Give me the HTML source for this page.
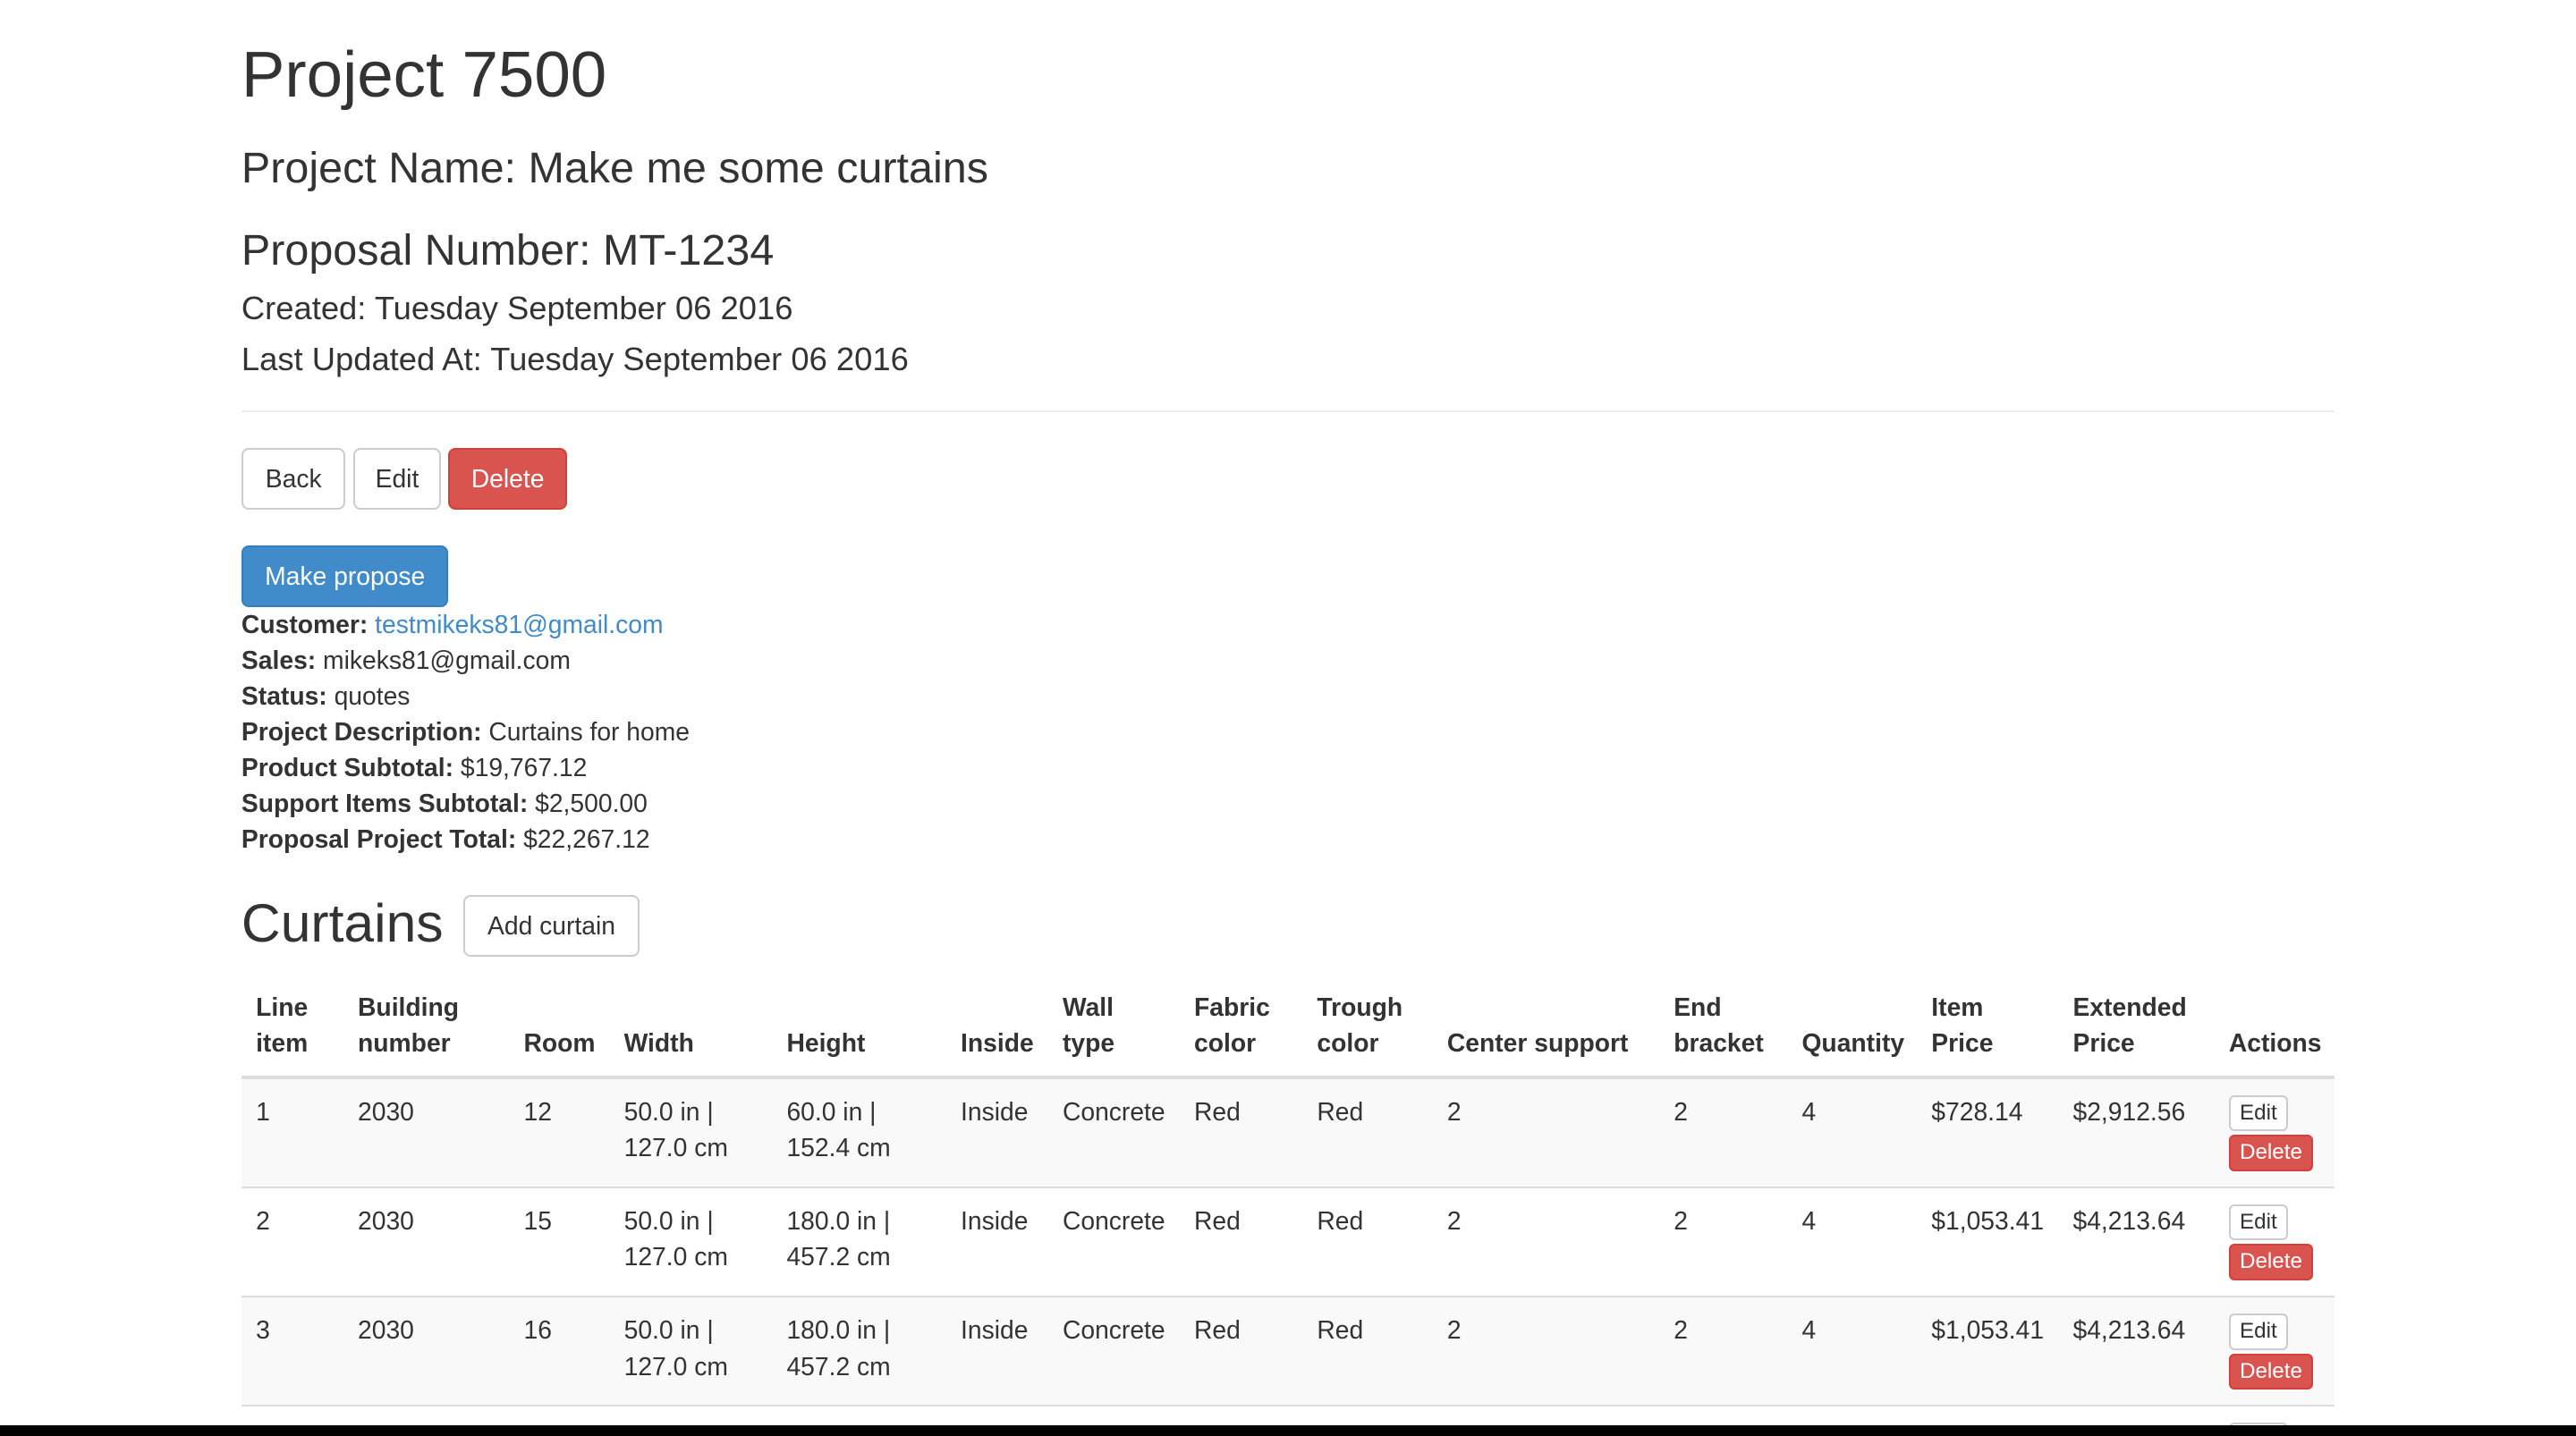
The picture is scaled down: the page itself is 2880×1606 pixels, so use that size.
<!DOCTYPE html>
<html><head><meta charset="utf-8">
<style>
html,body{margin:0;padding:0;background:#fff;overflow:hidden;}
body{width:2880px;height:1606px;position:relative;overflow:hidden;}
#z{zoom:2.0204;position:absolute;left:0;top:0;width:1425px;height:795px;overflow:hidden;font-family:"Liberation Sans",Arial,sans-serif;color:#333;font-size:14px;line-height:20px;}
.a{position:absolute;left:133.6px;margin:0;white-space:nowrap;}
h1.a{font-size:36px;line-height:39.6px;font-weight:500;}
h3.a{font-size:24px;line-height:26.4px;font-weight:500;}
h4.a{font-size:18px;line-height:19.8px;font-weight:500;}
h2.a{font-size:30px;line-height:33px;font-weight:500;}
.btn{position:absolute;box-sizing:border-box;border:1px solid #ccc;border-radius:4px;background:#fff;color:#333;font-size:14px;line-height:20px;text-align:center;padding:6px 0;height:34px;}
.red{background:#d9534f;border-color:#d43f3a;color:#fff;}
.blue{background:#428bca;border-color:#357ebd;color:#fff;}
a{color:#428bca;text-decoration:none;}
table{position:absolute;left:133.6px;top:539.3px;width:1158px;border-collapse:collapse;table-layout:fixed;}
th{text-align:left;vertical-align:bottom;padding:8px;border-bottom:2px solid #ddd;font-weight:bold;line-height:20px;}
td{vertical-align:top;padding:8px;border-top:1px solid #ddd;line-height:20px;height:43.5px;}
tbody tr:nth-child(odd) td{background:#f9f9f9;}
.xs{display:block;box-sizing:border-box;border:1px solid #ccc;border-radius:3px;background:#fff;color:#333;font-size:12px;line-height:16px;padding:1px 5px;width:max-content;margin-top:1px;}
.xs.red{background:#d9534f;border-color:#d43f3a;color:#fff;margin-top:2px;}
#bar{position:absolute;left:0;top:1594px;width:2880px;height:12px;background:#000;}
</style></head><body>
<div id="z">
<h1 class="a" style="top:22px">Project 7500</h1>
<h3 class="a" style="top:80.4px">Project Name: Make me some curtains</h3>
<h3 class="a" style="top:125.9px">Proposal Number: MT-1234</h3>
<h4 class="a" style="top:161px">Created: Tuesday September 06 2016</h4>
<h4 class="a" style="top:189.2px">Last Updated At: Tuesday September 06 2016</h4>
<div style="position:absolute;left:133.6px;top:227px;width:1158px;border-top:1px solid #eee"></div>
<div class="btn" style="left:133.6px;top:248px;width:57.7px">Back</div>
<div class="btn" style="left:195.5px;top:248px;width:48.5px">Edit</div>
<div class="btn red" style="left:248.2px;top:248px;width:65.5px">Delete</div>
<div class="btn blue" style="left:133.6px;top:302px;width:114.6px">Make propose</div>
<div class="a" style="top:335.5px;line-height:19.8px">
<b>Customer:</b> <a>testmikeks81@gmail.com</a><br>
<b>Sales:</b> mikeks81@gmail.com<br>
<b>Status:</b> quotes<br>
<b>Project Description:</b> Curtains for home<br>
<b>Product Subtotal:</b> $19,767.12<br>
<b>Support Items Subtotal:</b> $2,500.00<br>
<b>Proposal Project Total:</b> $22,267.12
</div>
<h2 class="a" style="top:494.5px">Curtains</h2>
<div class="btn" style="left:256.4px;top:495.5px;width:97.5px">Add curtain</div>
<table>
<colgroup><col style="width:56.4px"><col style="width:91.8px"><col style="width:55.5px"><col style="width:90px"><col style="width:96.3px"><col style="width:56.4px"><col style="width:72.8px"><col style="width:68px"><col style="width:72px"><col style="width:125.4px"><col style="width:70.9px"><col style="width:71.7px"><col style="width:78.3px"><col style="width:86.3px"><col style="width:66.2px"></colgroup>
<thead><tr><th>Line item</th><th>Building number</th><th>Room</th><th>Width</th><th>Height</th><th>Inside</th><th>Wall type</th><th>Fabric color</th><th>Trough color</th><th>Center support</th><th>End bracket</th><th>Quantity</th><th>Item Price</th><th>Extended Price</th><th>Actions</th></tr></thead>
<tbody>
<tr><td>1</td><td>2030</td><td>12</td><td>50.0 in |<br>127.0 cm</td><td>60.0 in |<br>152.4 cm</td><td>Inside</td><td>Concrete</td><td>Red</td><td>Red</td><td>2</td><td>2</td><td>4</td><td>$728.14</td><td>$2,912.56</td><td><span class="xs">Edit</span><span class="xs red">Delete</span></td></tr>
<tr><td>2</td><td>2030</td><td>15</td><td>50.0 in |<br>127.0 cm</td><td>180.0 in |<br>457.2 cm</td><td>Inside</td><td>Concrete</td><td>Red</td><td>Red</td><td>2</td><td>2</td><td>4</td><td>$1,053.41</td><td>$4,213.64</td><td><span class="xs">Edit</span><span class="xs red">Delete</span></td></tr>
<tr><td>3</td><td>2030</td><td>16</td><td>50.0 in |<br>127.0 cm</td><td>180.0 in |<br>457.2 cm</td><td>Inside</td><td>Concrete</td><td>Red</td><td>Red</td><td>2</td><td>2</td><td>4</td><td>$1,053.41</td><td>$4,213.64</td><td><span class="xs">Edit</span><span class="xs red">Delete</span></td></tr>
<tr><td>4</td><td>2030</td><td>17</td><td>50.0 in |<br>127.0 cm</td><td>180.0 in |<br>457.2 cm</td><td>Inside</td><td>Concrete</td><td>Red</td><td>Red</td><td>2</td><td>2</td><td>4</td><td>$1,053.41</td><td>$4,213.64</td><td><span class="xs">Edit</span><span class="xs red">Delete</span></td></tr>
</tbody></table>
</div>
<div id="bar"></div>
</body></html>
